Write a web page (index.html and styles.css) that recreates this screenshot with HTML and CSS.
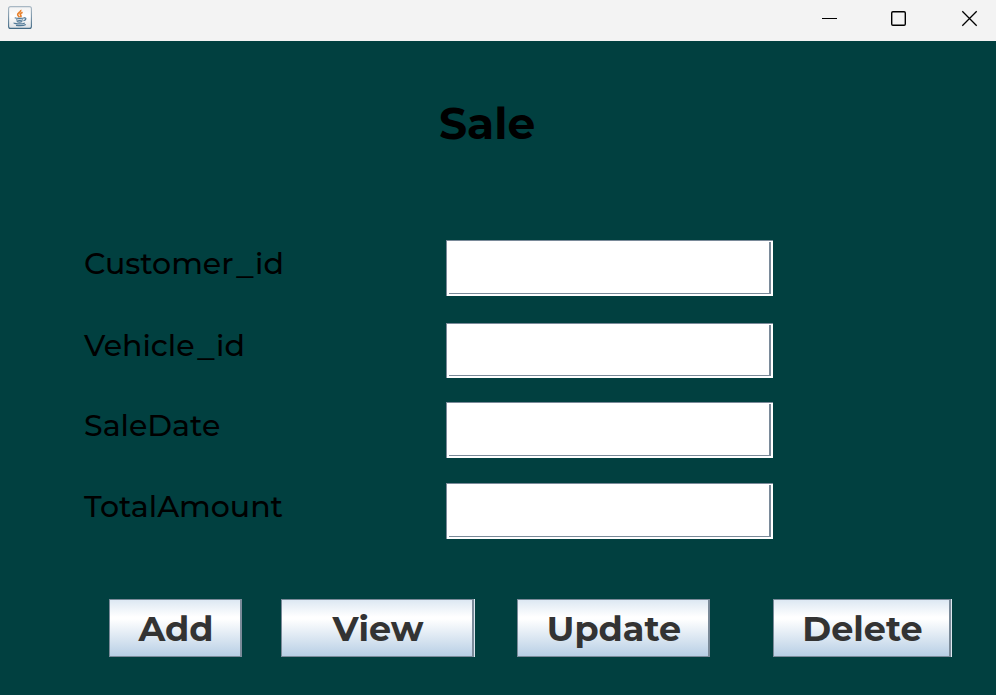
FILE: index.html
```html
<!DOCTYPE html>
<html lang="en">
<head>
<meta charset="utf-8">
<title>Sale</title>
<link rel="stylesheet" href="styles.css">
</head>
<body>
<header class="titlebar">
  <svg class="app-icon" width="24" height="24" viewBox="0 0 24 24">
    <defs><linearGradient id="tile" x1="0" y1="0" x2="0" y2="1"><stop offset="0" stop-color="#f2f2f2"/><stop offset=".45" stop-color="#fff"/><stop offset="1" stop-color="#dce1e5"/></linearGradient>
    <linearGradient id="edge" x1="0" y1="0" x2="0" y2="1"><stop offset="0" stop-color="#a9b8c4"/><stop offset="1" stop-color="#416985"/></linearGradient></defs>
    <rect x=".6" y=".6" width="22.8" height="21.8" rx="2" fill="url(#tile)" stroke="url(#edge)" stroke-width="1.1"/>
    <path d="M12.700 3.800c1 2.200-3.600 3-3 5 .2 1 1.300 1.600 1.700 2.500M14.600 6.300c-2.200 1-3 1.800-1.800 3 .6.7.2 1.300-.4 1.900" fill="none" stroke="#e9822e" stroke-width="1.700"/>
    <path d="M6.700 11.700c2 .9 7.800.9 10 0M15.800 12c3-.6 2.600 2-.3 2.700M8 13.700c2 .6 5.500.6 7 0M8.700 15.500c1.600.6 4 .6 5.600 0M6.300 16.800c-1.800.8 7.500 1.900 10.500.1M8 19.300c3.500.5 8 .3 9.800-.8" fill="none" stroke="#4f7896" stroke-width="1.200"/>
  </svg>
  <svg class="controls" width="156" height="18" viewBox="0 0 156 18" fill="none" stroke="#000">
    <path d="M0 8.500h15"/>
    <rect x="69.700" y="1.700" width="13.600" height="13.600" rx="1.200" stroke-width="1.400"/>
    <path d="M140.300 1.300l14.400 14.400M154.700 1.300l-14.400 14.400" stroke-width="1.300"/>
  </svg>
</header>
<main class="window">
  <h1 class="title">Sale</h1>
  <form class="form">
    <label class="label" for="customer">Customer<span class="underscore">_</span>id</label>
    <span class="field"><input id="customer" type="text"></span>
    <label class="label vehicle" for="vehicle">Vehicle<span class="underscore">_</span>id</label>
    <span class="field short"><input id="vehicle" type="text"></span>
    <label class="label" for="date">SaleDate</label>
    <span class="field"><input id="date" type="text"></span>
    <label class="label" for="amount">TotalAmount</label>
    <span class="field"><input id="amount" type="text"></span>
  </form>
  <nav class="actions">
    <button class="btn add"><span>Add</span></button>
    <button class="btn view lit"><span>View</span></button>
    <button class="btn update"><span>Update</span></button>
    <button class="btn delete lit"><span>Delete</span></button>
  </nav>
</main>
</body>
</html>
```
FILE: styles.css
```css
* { box-sizing: border-box; }
body { margin: 0; width: 996px; height: 695px; overflow: hidden; background: #014040; font-family: Montserrat, Inter, sans-serif; }
.titlebar { height: 41px; background: #f3f3f3; display: flex; justify-content: space-between; align-items: flex-start; padding: 6px 18px 0 8px; }
.controls { margin-top: 4px; }
.window { height: 654px; overflow: hidden; }
.title { margin: 55px 0 0 439px; height: 54px; line-height: 54px; font-size: 44px; font-weight: 700; color: #000; white-space: nowrap; }
.form { display: grid; grid-template-columns: 362px 327px; grid-template-rows: 83px 79px 81px 56px; margin: 90px 0 0 84px; height: 299px; }
.label { font-size: 30px; font-weight: 500; line-height: 48px; height: 48px; color: #000; white-space: nowrap; }
.vehicle { line-height: 46px; }
.underscore { display: inline-block; width: 21.500px; text-align: center; transform: translateY(2px) scaleX(1.15); }
.field { display: block; height: 56px; background: #fff; padding: 1px 2px 2px 2px; border-top: 1px solid #7a8a99; border-left: 1px solid #7a8a99; }
.field.short { height: 55px; }
.field input { display: block; width: 100%; height: 100%; border: 0; border-right: 2px solid #7a8a99; border-bottom: 1px solid #7a8a99; background: #fff; outline: 0; padding: 0 8px; font: 28px Montserrat, Inter, sans-serif; }
.actions { display: flex; margin: 60px 0 0 109px; }
.btn { height: 58px; padding: 0; border: 1px solid #7a8a99; border-right-width: 2px; background: linear-gradient(#dde8f3, #fff 30%, #fff 34%, #b8cfe5); color: #333; font: 700 35px/56px Montserrat, Inter, sans-serif; white-space: nowrap; }
.btn span { display: block; padding: 1px 0 0 2px; line-height: 55px; }
.lit { box-shadow: 1px 0 #dde8f0; }
.add { width: 133px; }
.view { width: 193px; margin-left: 39px; }
.update { width: 193px; margin-left: 43px; }
.delete { width: 178px; margin-left: 63px; }
```
